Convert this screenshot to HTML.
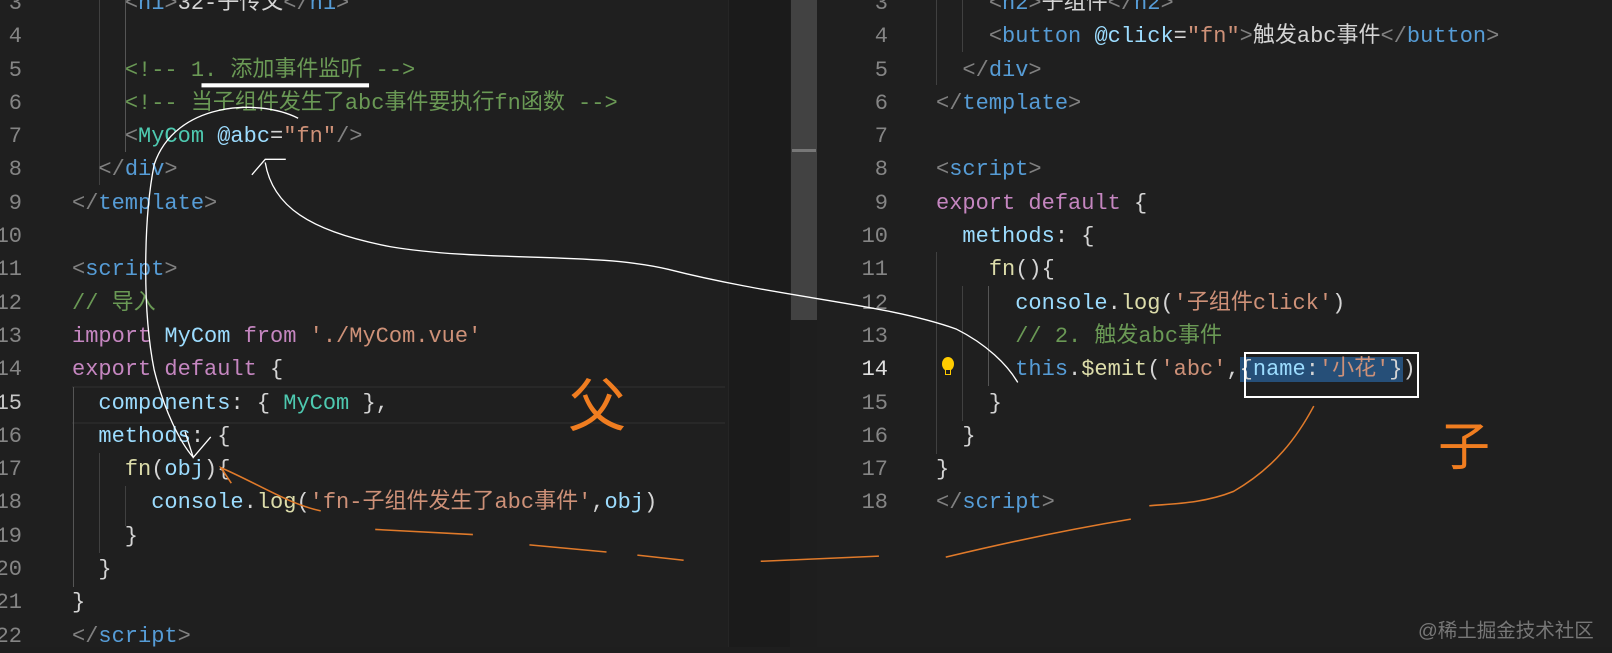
<!DOCTYPE html>
<html><head><meta charset="utf-8"><style>
body{margin:0;width:1612px;height:647px;overflow:hidden;background:#1e1e1e;position:relative;font-family:"Liberation Mono","Noto Sans CJK SC",monospace;font-size:22px}
.l{position:absolute;white-space:pre;line-height:33.3px;color:#d4d4d4}
.n{position:absolute;white-space:pre;line-height:33.3px;color:#858585;text-align:right;width:60px}
.g{color:#808080}.t{color:#569cd6}.c{color:#6a9955}.k{color:#4ec9b0}.a{color:#9cdcfe}.s{color:#ce9178}.p{color:#c586c0}.f{color:#dcdcaa}.y{color:#ffd700}.v{color:#da70d6}
.ig{position:absolute;width:1px;background:#404040}
</style></head><body>
<div style="position:absolute;left:0;top:0;width:728px;height:647px;background:#1f1f1f"></div>
<div style="position:absolute;left:728px;top:0;width:62px;height:647px;background:#1b1b1b;border-left:1px solid #252525"></div>
<div style="position:absolute;left:790px;top:0;width:27px;height:647px;background:#1e1e1e"></div>
<div style="position:absolute;left:791px;top:0;width:26px;height:320px;background:#424242"></div>
<div style="position:absolute;left:792px;top:149px;width:24px;height:3px;background:#777"></div>
<div style="position:absolute;left:817px;top:0;width:795px;height:647px;background:#1f1f1f"></div>
<div style="position:absolute;left:72px;top:386px;width:653px;height:34px;border-top:2px solid #282828;border-bottom:2px solid #282828"></div>
<div class="ig" style="left:99px;top:0;height:185px"></div>
<div class="ig" style="left:125px;top:0;height:152px;background:#555"></div>
<div class="ig" style="left:73px;top:387px;height:200px;background:#555"></div>
<div class="ig" style="left:99px;top:453px;height:100px"></div>
<div class="ig" style="left:125px;top:486px;height:40px"></div>
<div class="ig" style="left:936px;top:0;height:85px"></div>
<div class="ig" style="left:962px;top:0;height:52px"></div>
<div class="ig" style="left:936px;top:252px;height:202px"></div>
<div class="ig" style="left:962px;top:286px;height:135px"></div>
<div class="ig" style="left:988px;top:286px;height:100px;background:#555"></div>

<div class="n" style="left:-38px;top:-13px">3
4
5
6
7
8
9
10
11
12
13
14
<span style="color:#c6c6c6">15</span>
16
17
18
19
20
21
22</div>
<div class="l" style="left:72px;top:-13px">    <span class="g">&lt;</span><span class="t">h1</span><span class="g">&gt;</span>32-子传父<span class="g">&lt;/</span><span class="t">h1</span><span class="g">&gt;</span>

    <span class="c">&lt;!-- 1. 添加事件监听 --&gt;</span>
    <span class="c">&lt;!-- 当子组件发生了abc事件要执行fn函数 --&gt;</span>
    <span class="g">&lt;</span><span class="k">MyCom</span> <span class="a">@abc</span>=<span class="s">"fn"</span><span class="g">/&gt;</span>
  <span class="g">&lt;/</span><span class="t">div</span><span class="g">&gt;</span>
<span class="g">&lt;/</span><span class="t">template</span><span class="g">&gt;</span>

<span class="g">&lt;</span><span class="t">script</span><span class="g">&gt;</span>
<span class="c">// 导入</span>
<span class="p">import</span> <span class="a">MyCom</span> <span class="p">from</span> <span class="s">'./MyCom.vue'</span>
<span class="p">export</span> <span class="p">default</span> {
  <span class="a">components</span>: { <span class="k">MyCom</span> },
  <span class="a">methods</span>: {
    <span class="f">fn</span>(<span class="a">obj</span>){
      <span class="a">console</span>.<span class="f">log</span>(<span class="s">'fn-子组件发生了abc事件'</span>,<span class="a">obj</span>)
    }
  }
}
<span class="g">&lt;/</span><span class="t">script</span><span class="g">&gt;</span></div>

<div class="n" style="left:828px;top:-13px">3
4
5
6
7
8
9
10
11
12
13
<span style="color:#e0e0e0">14</span>
15
16
17
18</div>
<div class="l" style="left:936px;top:-13px">    <span class="g">&lt;</span><span class="t">h2</span><span class="g">&gt;</span>子组件<span class="g">&lt;/</span><span class="t">h2</span><span class="g">&gt;</span>
    <span class="g">&lt;</span><span class="t">button</span> <span class="a">@click</span>=<span class="s">"fn"</span><span class="g">&gt;</span>触发abc事件<span class="g">&lt;/</span><span class="t">button</span><span class="g">&gt;</span>
  <span class="g">&lt;/</span><span class="t">div</span><span class="g">&gt;</span>
<span class="g">&lt;/</span><span class="t">template</span><span class="g">&gt;</span>

<span class="g">&lt;</span><span class="t">script</span><span class="g">&gt;</span>
<span class="p">export</span> <span class="p">default</span> {
  <span class="a">methods</span>: {
    <span class="f">fn</span>(){
      <span class="a">console</span>.<span class="f">log</span>(<span class="s">'子组件click'</span>)
      <span class="c">// 2. 触发abc事件</span>
      <span class="t">this</span>.<span class="f">$emit</span>(<span class="s">'abc'</span>,<span style="background:#264f78">{<span class="a">name</span>:<span class="s">'小花'</span>}</span>)
    }
  }
}
<span class="g">&lt;/</span><span class="t">script</span><span class="g">&gt;</span></div>
<div style="position:absolute;left:1244px;top:352px;width:171px;height:42px;border:2px solid #fff"></div>
<svg style="position:absolute;left:938px;top:356px" width="20" height="24"><ellipse cx="10" cy="8" rx="6" ry="7" fill="#ffcc00"/><rect x="7" y="13" width="6" height="6" fill="#ffcc00"/><rect x="8" y="14" width="4" height="4" fill="#1f1f1f"/></svg>

<svg style="position:absolute;left:0;top:0" width="1612" height="647" fill="none">
<g transform="scale(1.028)">
<rect x="196" y="81" width="163" height="4" fill="#fff"/>
<g stroke="#fff" stroke-width="1.3">
<path d="M290 115 C250 95 170 100 150 160 C140 210 138 300 150 360 C160 400 175 430 188 445"/>
<path d="M180 420 L188 445 L205 425"/>
<path d="M245 170 L258 155 L278 155"/>
<path d="M258 158 C265 200 300 225 380 240 C470 255 580 245 650 262 C760 290 860 295 930 320 C960 335 980 355 990 372"/>
</g>
<g stroke="#e07a2a" stroke-width="1.5">
<path d="M1278 395 C1262 425 1240 455 1200 478 C1170 490 1140 490 1118 492"/>
<path d="M1100 505 C1040 515 970 530 920 542"/>
<path d="M855 541 L740 546"/>
<path d="M665 545 L620 540"/>
<path d="M590 537 L515 530"/>
<path d="M460 520 L365 515"/>
<path d="M312 497 C280 490 250 470 215 455 L225 470"/>
</g>
</g>
</svg>
<div style="position:absolute;left:568px;top:370px;font-size:58px;color:#f07d20;font-family:'Noto Sans CJK SC',sans-serif;line-height:62px">父</div>
<div style="position:absolute;left:1438px;top:414px;font-size:52px;color:#f07d20;font-family:'Noto Sans CJK SC',sans-serif;line-height:58px">子</div>
<div style="position:absolute;left:1418px;top:614px;font-size:19.5px;color:#777;font-family:'Liberation Sans','Noto Sans CJK SC',sans-serif">@稀土掘金技术社区</div>
</body></html>
